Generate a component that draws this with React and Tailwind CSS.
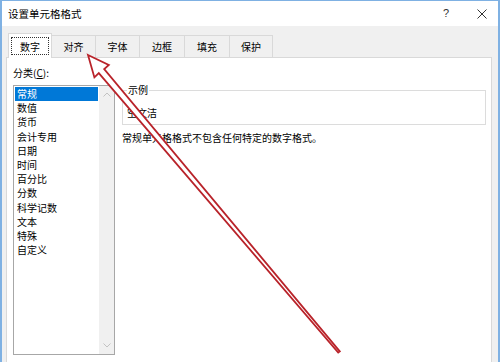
import React from 'react';

const categories = ["常规", "数值", "货币", "会计专用", "日期", "时间", "百分比", "分数", "科学记数", "文本", "特殊", "自定义"];
const tabs = ["数字", "对齐", "字体", "边框", "填充", "保护"];

function Arrow() {
  return (
    <svg className="absolute inset-0 pointer-events-none" width="500" height="362" viewBox="0 0 500 362">
      <polygon
        points="86,54 106.8,64 102.2,68.1 337.8,350.4 336.2,351.6 96.8,72.1 92.4,76.4"
        fill="#ffffff"
        stroke="#b9232a"
        strokeWidth="1.8"
        strokeLinejoin="miter"
      />
    </svg>
  );
}

export default function App() {
  return (
    <div
      className="relative w-[500px] h-[362px] overflow-hidden flex flex-col bg-[#f0f0f0] border-t border-x-2 border-[#7fb1e3] text-[10px] text-black"
      style={{ fontFamily: '"Noto Sans CJK SC", "Noto Sans", sans-serif' }}
    >
      {/* title bar */}
      <div className="h-[25px] bg-white flex items-center justify-between pl-[6px] pr-[11px] shrink-0">
        <span className="text-[10.5px]">设置单元格格式</span>
        <div className="flex items-center gap-[28px]">
          <span className="text-[11px] text-[#333]" style={{ fontFamily: '"Liberation Sans", sans-serif' }}>?</span>
          <svg width="10" height="10" viewBox="0 0 10 10">
            <path d="M0.5 0.5 L9.5 9.5 M9.5 0.5 L0.5 9.5" stroke="#333" strokeWidth="1" />
          </svg>
        </div>
      </div>

      {/* tabs */}
      <div className="flex items-end pl-[6px] pt-[7px] shrink-0">
        {tabs.map((t, i) =>
          i === 0 ? (
            <div key={t} className="w-[44px] h-[25px] bg-white border-t border-x border-[#d9d9d9] -mb-px relative z-10 flex items-center justify-center">
              <span className="border border-dotted border-[#333] w-[38px] h-[18px] flex items-center justify-center">{t}</span>
            </div>
          ) : (
            <div key={t} className={`${i === 3 || i === 4 ? 'w-[45px]' : i === 5 ? 'w-[43px]' : 'w-[44px]'} h-[22px] border-t border-r border-[#d9d9d9] flex items-center justify-center`}>
              {t}
            </div>
          )
        )}
      </div>

      {/* panel */}
      <div className="ml-[4px] w-[486px] flex-1 bg-white border border-[#d9d9d9] border-b-0 flex pl-[6px] pr-[5px] pt-[7px]">
        <div className="flex flex-col w-[102px] shrink-0">
          <div className="leading-[16px]">分类(<span className="underline">C</span>):</div>
          <div className="mt-[4px] h-[270px] border border-[#a7a7a7] flex">
            <div className="flex-1 flex flex-col p-px">
              {categories.map((c, i) => (
                <div
                  key={c}
                  className={`h-[14.2px] leading-[14.2px] pl-[2px] ${i === 0 ? 'bg-[#0078d7] text-white' : ''}`}
                >
                  {c}
                </div>
              ))}
            </div>
            <div className="w-[15px] bg-[#f0f0f0] flex flex-col items-center justify-between py-[6px]">
              <svg width="8" height="5" viewBox="0 0 8 5">
                <path d="M0.5 4.5 L4 1 L7.5 4.5" fill="none" stroke="#c2c2c2" strokeWidth="1" />
              </svg>
              <svg width="8" height="5" viewBox="0 0 8 5">
                <path d="M0.5 0.5 L4 4 L7.5 0.5" fill="none" stroke="#c2c2c2" strokeWidth="1" />
              </svg>
            </div>
          </div>
        </div>

        <div className="flex-1 ml-[7px] mt-[18px] flex flex-col">
          <fieldset className="h-[42px] border border-[#dcdcdc] px-[4px] m-0">
            <legend className="px-px leading-[14px]">示例</legend>
            <div className="leading-[16px] pt-[8px]">空文洁</div>
          </fieldset>
          <div className="mt-[5px] leading-[16px]">常规单元格格式不包含任何特定的数字格式。</div>
        </div>
      </div>

      <Arrow />
    </div>
  );
}
